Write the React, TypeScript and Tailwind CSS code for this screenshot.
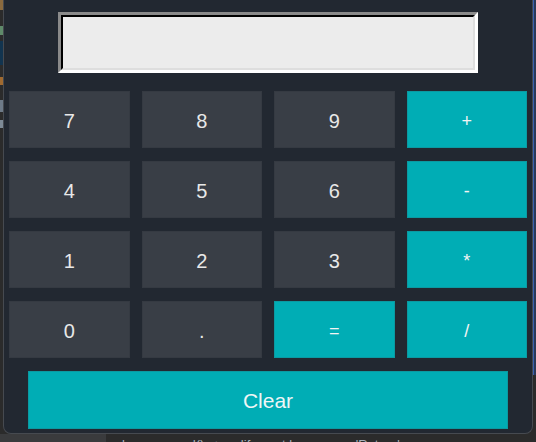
const rows: { label: string; accent?: boolean }[][] = [
  [{ label: "7" }, { label: "8" }, { label: "9" }, { label: "+", accent: true }],
  [{ label: "4" }, { label: "5" }, { label: "6" }, { label: "-", accent: true }],
  [{ label: "1" }, { label: "2" }, { label: "3" }, { label: "*", accent: true }],
  [{ label: "0" }, { label: "." }, { label: "=", accent: true }, { label: "/", accent: true }],
];

function Key({ label, accent }: { label: string; accent?: boolean }) {
  return (
    <button
      className={
        accent
          ? "h-[57px] flex items-center justify-center pt-[3px] bg-[#00adb5] border border-[#0b9aa2] text-[#f4f4f4] text-[18px]"
          : "h-[57px] flex items-center justify-center pt-[3px] bg-[#393e46] border border-[#353a42] text-[#e8e8e8] text-[20px]"
      }
    >
      {label}
    </button>
  );
}

export default function App() {
  return (
    <div className="w-[536px] h-[442px] flex flex-col bg-[#2b2b2b] overflow-hidden font-['Liberation_Sans',Arial,sans-serif]">
      <div className="flex h-[434px]">
        {/* editor behind, left edge */}
        <div className="w-[3px] flex flex-col bg-[#2b2b2b]">
          <div className="h-[10px] bg-[#8a6a3e]" />
          <div className="h-[16px]" />
          <div className="h-[9px] bg-[#5f8a6a]" />
          <div className="h-[6px]" />
          <div className="h-[24px] bg-[#12344f]" />
          <div className="h-[12px]" />
          <div className="h-[8px] bg-[#a06a30]" />
          <div className="h-[15px]" />
          <div className="h-[12px] bg-[#6d7a88]" />
          <div className="h-[8px]" />
          <div className="h-[8px] bg-[#7d8a96]" />
        </div>

        {/* calculator window */}
        <div className="w-[530px] h-[434px] flex flex-col bg-[#222831] border-x border-b border-[#464a50] rounded-b-[8px]">
          {/* display */}
          <div className="flex justify-center pt-[12px]">
            <div className="w-[420px] h-[61px] border-[3px] border-t-[#8a8a8a] border-l-[#8a8a8a] border-b-white border-r-white">
              <div className="h-full border-2 border-t-black border-l-black border-b-[#dedede] border-r-[#dedede] bg-[#ececec]" />
            </div>
          </div>

          {/* keypad */}
          <div className="flex flex-col gap-[13px] px-[5px] pt-[18px]">
            {rows.map((row, i) => (
              <div key={i} className="grid grid-cols-4 gap-[12px]">
                {row.map((k) => (
                  <Key key={k.label} label={k.label} accent={k.accent} />
                ))}
              </div>
            ))}
          </div>

          <div className="flex justify-center pt-[13px]">
            <button className="w-[480px] h-[58px] flex items-center justify-center pt-[2px] bg-[#00adb5] border border-[#0b9aa2] text-[#eef6f6] text-[21px]">
              Clear
            </button>
          </div>
        </div>

        {/* editor behind, right edge */}
        <div className="w-[3px] flex flex-col bg-[#2b2b2b]">
          <div className="h-[375px] bg-[#2b3a5a] border-l border-[#3a62b0]" />
        </div>
      </div>

      {/* editor breadcrumb peeking below */}
      <div className="h-[8px] flex">
        <div className="w-[106px] bg-[#3a3b3d]" />
        <div className="flex-1 bg-[#2b2b2b] overflow-hidden pl-[16px] pt-[4px] text-[13px] leading-[13px] text-[#a9b1bb] whitespace-pre font-['Liberation_Sans',sans-serif]">
          key_pressed()   &gt;   elif event.keysym == 'Return'
        </div>
      </div>
    </div>
  );
}
